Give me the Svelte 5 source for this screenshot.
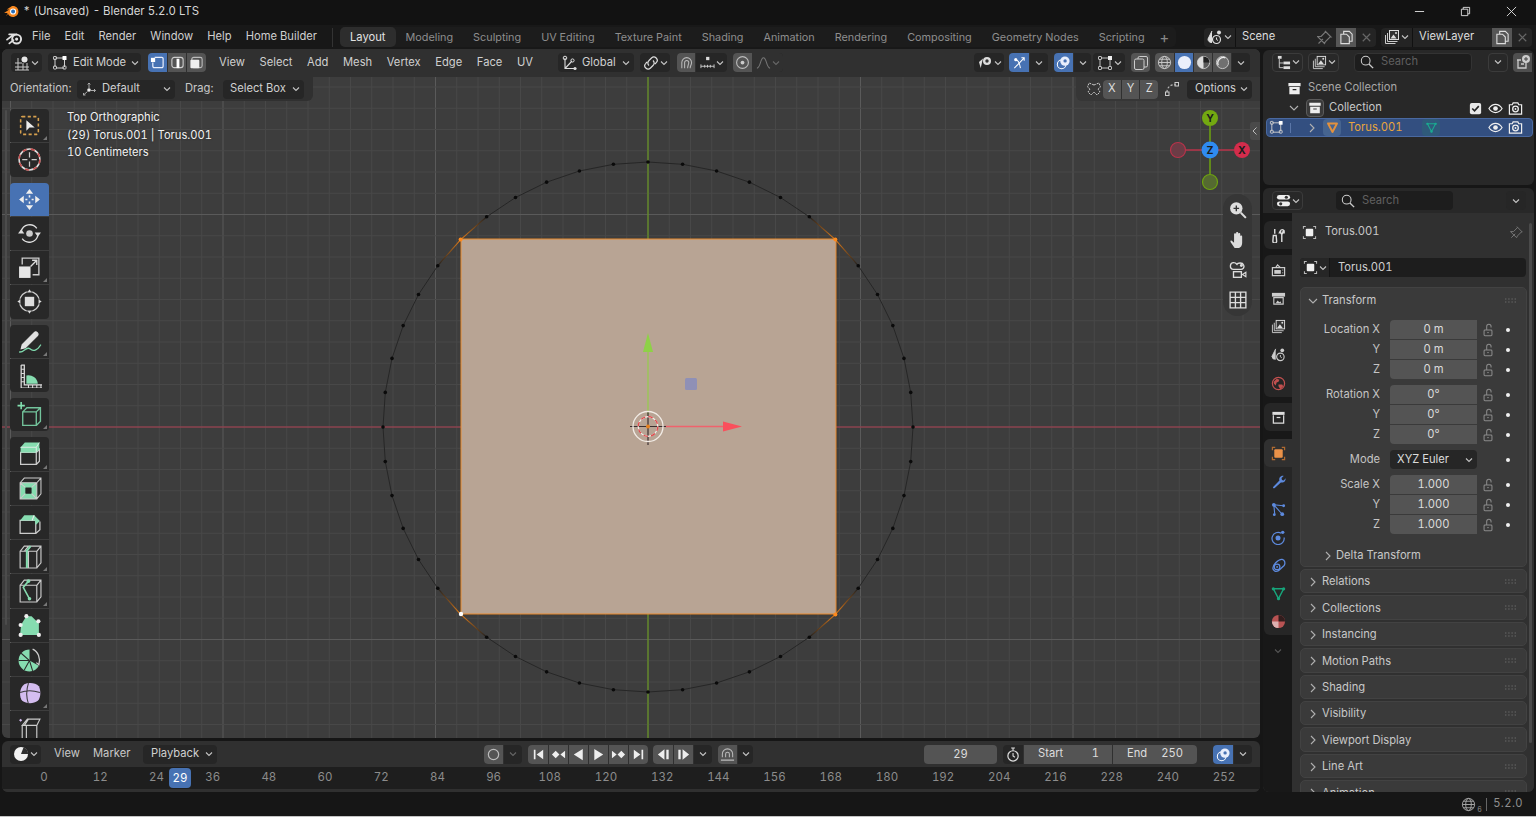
<script>
  const menus = ['File', 'Edit', 'Render', 'Window', 'Help', 'Home Builder'];
  const tabs = ['Layout', 'Modeling', 'Sculpting', 'UV Editing', 'Texture Paint', 'Shading', 'Animation', 'Rendering', 'Compositing', 'Geometry Nodes', 'Scripting'];
  const vpMenus = ['View', 'Select', 'Add', 'Mesh', 'Vertex', 'Edge', 'Face', 'UV'];

  const toolGroups = [
    [['t-select', true], ['t-cursor', false]],
    [['t-move', false, true], ['t-rotate', false], ['t-scale', true], ['t-transform', false]],
    [['t-annotate', true], ['t-measure', false]],
    [['t-add', true]],
    [['t-extrude', true], ['t-inset', false], ['t-bevel', false], ['t-loop', true], ['t-knife', true], ['t-poly', false], ['t-spin', false], ['t-smooth', true], ['t-shear', false]]
  ];

  const propGroups = [
    [['p-tool', '']],
    [['p-render', ''], ['p-output', ''], ['p-layer', ''], ['p-scene', ''], ['p-world', 'red']],
    [['p-coll', '']],
    [['p-object', 'act'], ['p-mod', 'blue'], ['p-part', 'blue'], ['p-phys', 'blue'], ['p-cons', 'blue'], ['p-data', 'green'], ['p-mat', 'rose']]
  ];

  const transformGroups = [
    [['Location X', '0 m'], ['Y', '0 m'], ['Z', '0 m']],
    [['Rotation X', '0°'], ['Y', '0°'], ['Z', '0°']],
    'mode',
    [['Scale X', '1.000'], ['Y', '1.000'], ['Z', '1.000']]
  ];
  const collapsed = ['Relations', 'Collections', 'Instancing', 'Motion Paths', 'Shading', 'Visibility', 'Viewport Display', 'Line Art', 'Animation'];
  const ruler = Array.from({ length: 22 }, (_, i) => i * 12);

  // Free canvas of the 3D view, in screen coordinates
  const cx = 648, cy = 427, R = 265, major = 212.5, minor = 21.25;
  const gridX = [], gridY = [];
  for (let i = -32; i <= 32; i++) {
    const x = cx + i * minor, y = cy + i * minor;
    if (x > 2 && x < 1260) gridX.push({ v: x, major: i % 10 === 0 });
    if (y > 49 && y < 738) gridY.push({ v: y, major: i % 10 === 0 });
  }
  const verts = Array.from({ length: 48 }, (_, i) => {
    const a = (i * 7.5 * Math.PI) / 180;
    return { x: cx + R * Math.sin(a), y: cy - R * Math.cos(a), i };
  });
  const ring = verts.map((v) => `${v.x.toFixed(1)},${v.y.toFixed(1)}`).join(' ');
  const corners = [6, 18, 30, 42];
  const fades = corners.flatMap((c) => [c - 1, c + 1].map((n) => ({ a: verts[c], b: verts[n], id: `f${c}-${n}` })));
</script>

{#snippet ic(name, cls = '')}
  <svg class="ic {cls}" viewBox="0 0 16 16"><use href="#{name}" /></svg>
{/snippet}

{#snippet chev(cls = '')}
  <svg class="chev {cls}" viewBox="0 0 8 8"><path d="M1 2.5l3 3 3-3" /></svg>
{/snippet}

{#snippet arrow(open)}
  <svg class="arrow" viewBox="0 0 10 10"><path d={open ? 'M1 3l4 4 4-4' : 'M3 1l4 4-4 4'} /></svg>
{/snippet}

{#snippet grip()}
  <svg class="grip" viewBox="0 0 12 6"><path d="M0 1h1.4M3.2 1h1.4M6.4 1h1.4M9.6 1h1.4M0 4h1.4M3.2 4h1.4M6.4 4h1.4M9.6 4h1.4" /></svg>
{/snippet}

<svg class="defs" aria-hidden="true">
  <defs>
    <symbol id="logo" viewBox="0 0 16 16"><circle cx="10" cy="9.500" r="4.200" fill="none" stroke="currentColor" stroke-width="1.800" /><circle cx="10" cy="9.500" r="1.500" fill="currentColor" /><path d="M1 10l6-4.500M3 5h7M3.200 13.500 7 10.500" fill="none" stroke="currentColor" stroke-width="1.700" stroke-linecap="round" /></symbol>
    <symbol id="logo-c" viewBox="0 0 16 16"><path d="M1 9.500 6 6H3.500l5-3.200c3.600-.4 6 2 6 5.200 0 3-2.400 5.200-5.200 5.200-2.200 0-4-1.300-4.600-3.100L3 12.500 4.300 9.500z" fill="#f5861f" /><circle cx="9.500" cy="8" r="2.400" fill="#2b6fb8" stroke="#fff" stroke-width="1" /></symbol>
    <symbol id="view3d" viewBox="0 0 16 16"><circle cx="10.500" cy="4.500" r="3" fill="#e6e6e6" /><path d="M4 3v12M1 12h14M1 8h7M1 15h14M9 8v7M13 8v7" fill="none" stroke="#c8c8c8" stroke-width="1" /></symbol>
    <symbol id="editmode" viewBox="0 0 16 16"><path d="M3.500 3h8M3 3.500V12M12.500 4.500V12M4 13h8" fill="none" stroke="currentColor" stroke-width="1" /><rect x="1.500" y="11" width="3" height="3" rx=".6" fill="none" stroke="currentColor" /><rect x="11" y="11" width="3" height="3" rx=".6" fill="none" stroke="currentColor" /><rect x="1.500" y="1.500" width="3" height="3" rx=".6" fill="none" stroke="currentColor" /><rect x="10.500" y="1" width="4" height="4" rx=".6" fill="#fff" /></symbol>
    <symbol id="sel-v" viewBox="0 0 16 16"><path d="M5 2.500h7.500a1.500 1.500 0 0 1 1.500 1.500v8a1.500 1.500 0 0 1-1.500 1.500h-8A1.500 1.500 0 0 1 3 12V8" fill="none" stroke="#e8eefc" stroke-width="1.300" /><rect x="1" y="3" width="4.500" height="4.500" fill="#fff" /></symbol>
    <symbol id="sel-e" viewBox="0 0 16 16"><rect x="2" y="2.500" width="12" height="11" rx="2.500" fill="none" stroke="#ccc" stroke-width="1.200" /><rect x="7" y="4" width="3" height="10" fill="#fff" /></symbol>
    <symbol id="sel-f" viewBox="0 0 16 16"><rect x="3" y="2.500" width="11" height="11" rx="2" fill="none" stroke="#bbb" stroke-width="1.200" /><rect x="1.500" y="5" width="9.500" height="9" rx="1" fill="#eee" /></symbol>
    <symbol id="orient" viewBox="0 0 16 16"><circle cx="8" cy="9" r="1.800" fill="#eee" /><path d="M8 7V2M6.600 3.400 8 2l1.400 1.400M10 9.500h4.500M13 8l1.500 1.500L13 11M6.500 10.500 2.500 14M2.500 12v2h2" fill="none" stroke="#aaa" stroke-width="1" /></symbol>
    <symbol id="global" viewBox="0 0 16 16"><path d="M3 3v10.500h10.500M3 13.500 10 6" fill="none" stroke="#ddd" stroke-width="1.100" /><circle cx="3" cy="3" r="1.800" fill="none" stroke="#ddd" /><circle cx="13" cy="13.500" r="1.600" fill="#ddd" /><circle cx="10.500" cy="5.500" r="1.600" fill="none" stroke="#ddd" /></symbol>
    <symbol id="link" viewBox="0 0 16 16"><path d="M6 10.500a3.300 3.300 0 0 1 0-5l2.500-2.500a3.300 3.300 0 0 1 4.700 4.700L12 9M10 5.500a3.300 3.300 0 0 1 0 5L7.500 13a3.300 3.300 0 0 1-4.700-4.700L4 7" fill="none" stroke="#ddd" stroke-width="1.200" /></symbol>
    <symbol id="magnet" viewBox="0 0 16 16"><path d="M3 14V8a5.200 5.200 0 0 1 10.400 0c0 2.500-1.500 3.500-1.500 6M6 14V8a2.200 2.200 0 0 1 4.400 0c0 2-1.200 3.500-1.200 6" fill="none" stroke="#bbb" stroke-width="1.100" /></symbol>
    <symbol id="snapgrid" viewBox="0 0 16 16"><rect x="6.500" y="2" width="3.500" height="3.500" fill="#ddd" /><path d="M1 10v4M15 10v4M1 12h14M5 10.500v3M8 10.500v3M11 10.500v3" fill="none" stroke="#ccc" /></symbol>
    <symbol id="prop" viewBox="0 0 16 16"><circle cx="8" cy="8" r="6.300" fill="none" stroke="#bbb" stroke-width="1.200" /><circle cx="8" cy="8" r="2" fill="#ccc" /></symbol>
    <symbol id="falloff" viewBox="0 0 16 16"><path d="M1 14c4 0 3.500-11 7-11s3 11 7 11" fill="none" stroke="#777" stroke-width="1.100" /></symbol>
    <symbol id="visible" viewBox="0 0 16 16"><path d="M2 7l4-3.500L3.700 13z" fill="#ddd" /><circle cx="10" cy="6" r="4" fill="#ddd" /><circle cx="10" cy="6" r="1.700" fill="#333" /></symbol>
    <symbol id="gizmo" viewBox="0 0 16 16"><path d="M2.500 14 13 3M10 3h3v3" fill="none" stroke="#fff" stroke-width="1.100" /><path d="M4 5c2 0 4 3 5 9" fill="none" stroke="#fff" stroke-width="1.100" /><circle cx="4" cy="5" r="1.700" fill="#fff" /></symbol>
    <symbol id="overlay" viewBox="0 0 16 16"><circle cx="6" cy="10" r="4.600" fill="none" stroke="#fff" stroke-width="1.100" /><circle cx="9.500" cy="6.500" r="5" fill="#e8eefc" /><circle cx="9.700" cy="6.300" r="1.800" fill="#4772b3" /></symbol>
    <symbol id="meshsel" viewBox="0 0 16 16"><path d="M4 3h8M3 4v8M13 4v8M4 13h8" fill="none" stroke="#bbb" /><rect x="1.500" y="1.500" width="3" height="3" rx=".6" fill="none" stroke="#ccc" /><rect x="1.500" y="11.500" width="3" height="3" rx=".6" fill="none" stroke="#ccc" /><rect x="11.500" y="11.500" width="3" height="3" rx=".6" fill="none" stroke="#ccc" /><rect x="11" y="1" width="4" height="4" fill="#eee" /></symbol>
    <symbol id="xray" viewBox="0 0 16 16"><rect x="5" y="1.500" width="9.500" height="10.500" rx="1.500" fill="none" stroke="#ccc" /><rect x="1.500" y="4" width="9.500" height="10.500" rx="1.500" fill="#545454" stroke="#ccc" /></symbol>
    <symbol id="s-wire" viewBox="0 0 16 16"><g fill="none" stroke="#ccc"><circle cx="8" cy="8" r="6.500" /><ellipse cx="8" cy="8" rx="3" ry="6.500" /><path d="M1.500 8h13M2.500 4.500h11M2.500 11.500h11" /></g></symbol>
    <symbol id="s-solid" viewBox="0 0 16 16"><circle cx="8" cy="8" r="7" fill="#e9eefb" /></symbol>
    <symbol id="s-mat" viewBox="0 0 16 16"><circle cx="8" cy="8" r="6.500" fill="#5a5a5a" stroke="#ccc" /><path d="M8 1.500A6.500 6.500 0 0 0 1.500 8 6.500 6.500 0 0 0 8 14.500z" fill="#ddd" /><path d="M8 8h6.500A6.500 6.500 0 0 0 8 1.500z" fill="#222" /></symbol>
    <symbol id="s-rend" viewBox="0 0 16 16"><circle cx="8" cy="8" r="6.500" fill="#707070" stroke="#ccc" /><path d="M3.500 11A6 6 0 0 1 11 3" fill="none" stroke="#eee" stroke-width="1.400" /></symbol>
    <symbol id="mirror" viewBox="0 0 16 16"><path d="M8 4 3 2 1.500 6 4 8 2 11l3 3 3-3 3 3 3-3-2-3 2.500-2L13 2z" fill="none" stroke="#ccc" stroke-dasharray="2 1" /></symbol>
    <symbol id="automerge" viewBox="0 0 16 16"><path d="M3 11a7 7 0 0 1 9-7" fill="none" stroke="#bbb" stroke-dasharray="2.200 1.600" stroke-width="1.200" /><rect x="1.500" y="11" width="3.500" height="3.500" fill="none" stroke="#ccc" /><rect x="11" y="1.500" width="3.500" height="3.500" fill="none" stroke="#ccc" /></symbol>
    <symbol id="scene" viewBox="0 0 16 16"><path d="M5 2 1 10a3.500 3.500 0 0 0 4 3.500" fill="#ddd" stroke="#ddd" /><circle cx="12" cy="3.500" r="2" fill="#ddd" /><circle cx="9.500" cy="10.500" r="4" fill="#282828" stroke="#ddd" stroke-width="1.200" /><path d="M9.500 8.500v2l1.500 1" fill="none" stroke="#ddd" /></symbol>
    <symbol id="pin" viewBox="0 0 16 16"><path d="M1.500 14.500 6 10M4 7.500 8.500 3l-.5-1 6 6-1 0-4.500 4.500-1 2-7-7z" fill="none" stroke="#777" stroke-width="1.100" /></symbol>
    <symbol id="copy" viewBox="0 0 16 16"><path d="M5 4V1.500h6l3 3V12h-3M2 4.500h6l3 3v7H2z" fill="none" stroke="#ddd" stroke-width="1.200" /></symbol>
    <symbol id="close" viewBox="0 0 16 16"><path d="M4 4l8 8M12 4l-8 8" stroke="#666" stroke-width="1.300" /></symbol>
    <symbol id="layer" viewBox="0 0 16 16"><path d="M1.500 6v8.500h10" fill="none" stroke="#ccc" /><path d="M3.500 4v8.500h10" fill="none" stroke="#ccc" /><rect x="5.500" y="1.500" width="9" height="9" fill="#333" stroke="#ddd" /><path d="M6.500 9.500l3-4 3 4z" fill="#ddd" /><circle cx="12" cy="4" r="1" fill="#ddd" /></symbol>
    <symbol id="outl" viewBox="0 0 16 16"><rect x="2" y="1" width="4" height="3" fill="#ddd" /><path d="M3.500 4v9.500H8M3.500 8.500H8" fill="none" stroke="#ccc" /><rect x="8" y="7" width="7" height="3" fill="#ddd" /><rect x="8" y="12" width="7" height="3" fill="#ddd" /></symbol>
    <symbol id="search" viewBox="0 0 16 16"><circle cx="6.500" cy="6.500" r="5" fill="none" stroke="#ccc" stroke-width="1.200" /><path d="M10.200 10.200 15 15" stroke="#ccc" stroke-width="1.600" /></symbol>
    <symbol id="newcoll" viewBox="0 0 16 16"><path d="M2 6h4M3 6v8h8V9" fill="none" stroke="#ccc" stroke-width="1.300" /><path d="M6 10h3" stroke="#ccc" stroke-width="1.300" /><circle cx="11" cy="5" r="4" fill="#ccc" /><path d="M11 3v4M9 5h4" stroke="#444" /></symbol>
    <symbol id="box" viewBox="0 0 16 16"><path d="M1.500 2h13v3.500h-13z" fill="#eee" /><path d="M2.500 6.500h11V14h-11zM6 8.500h4v1.300H6z" fill="#eee" fill-rule="evenodd" /></symbol>
    <symbol id="check" viewBox="0 0 16 16"><rect x="2" y="2" width="12" height="12" rx="2" fill="#e8e8e8" /><path d="M4.500 8 7 10.500l4.500-5" fill="none" stroke="#222" stroke-width="1.700" /></symbol>
    <symbol id="eye" viewBox="0 0 16 16"><path d="M1 8c2-3 4.500-4.300 7-4.300S13 5 15 8c-2 3-4.500 4.300-7 4.300S3 11 1 8z" fill="none" stroke="#eee" stroke-width="1.300" /><circle cx="8" cy="8" r="2.500" fill="#eee" /></symbol>
    <symbol id="cam" viewBox="0 0 16 16"><path d="M1.500 4h3l1-2h5l1 2h3v10h-13z" fill="none" stroke="#eee" stroke-width="1.300" /><circle cx="8" cy="8.500" r="3" fill="none" stroke="#eee" stroke-width="1.400" /><circle cx="8" cy="8.500" r="1" fill="#eee" /></symbol>
    <symbol id="tri" viewBox="0 0 16 16"><path d="M2.500 3h11L8 13.500z" fill="none" stroke="#e2913e" stroke-width="2.400" stroke-linejoin="round" /></symbol>
    <symbol id="tri-g" viewBox="0 0 16 16"><path d="M3 3.500h10L8 13z" fill="none" stroke="#1aaa90" stroke-width="1.300" /><circle cx="3" cy="3.500" r="1.500" fill="#1aaa90" /><circle cx="13" cy="3.500" r="1.500" fill="#1aaa90" /><circle cx="8" cy="13" r="1.500" fill="#1aaa90" /></symbol>
    <symbol id="lock" viewBox="0 0 16 16"><rect x="3.500" y="8" width="9" height="6.500" rx="1" fill="none" stroke="#8a8a8a" stroke-width="1.200" /><path d="M6.500 8V4a2.500 2.500 0 0 1 5 0v1" fill="none" stroke="#8a8a8a" stroke-width="1.200" /><path d="M7 11h2" stroke="#8a8a8a" /></symbol>
    <symbol id="frame" viewBox="0 0 16 16"><path d="M1.500 4V1.500H4M12 1.500h2.500V4M14.500 12v2.500H12M4 14.500H1.500V12" fill="none" stroke="currentColor" stroke-width="1.100" /><rect x="4" y="4" width="8" height="8" rx="1" fill="#f0f0f0" /></symbol>

    <symbol id="p-tool" viewBox="0 0 16 16"><path d="M4 1v5M2.500 8h3l.5 6a2 2 0 0 1-4 0zM10 3a2.200 2.200 0 0 1 4 0v2h-1V3l-.8 3h-1.400L10 3v2H9zM11.500 6v9" fill="none" stroke="#ddd" stroke-width="1.500" /></symbol>
    <symbol id="p-render" viewBox="0 0 16 16"><path d="M1.500 5h13v8.500h-13zM5 5l2-3 3 3" fill="none" stroke="#ccc" stroke-width="1.300" /><path d="M3.500 7.500h7v4h-7z" fill="#ccc" /><path d="M12.500 7v1M12.500 10v1" stroke="#ccc" /></symbol>
    <symbol id="p-output" viewBox="0 0 16 16"><path d="M1 2h14v4H1z" fill="#ccc" /><path d="M3 7h10v7H3z" fill="none" stroke="#ccc" stroke-width="1.200" /><path d="M5 13l2-3 2 2 1-1 1 2z" fill="#ccc" /></symbol>
    <symbol id="p-layer" viewBox="0 0 16 16"><use href="#layer" width="16" height="16" /></symbol>
    <symbol id="p-scene" viewBox="0 0 16 16"><path d="M5 2 1 10a3.500 3.500 0 0 0 4 3" fill="#ccc" stroke="#ccc" /><circle cx="12" cy="3.500" r="2" fill="#ccc" /><circle cx="10" cy="10.500" r="4" fill="none" stroke="#ccc" stroke-width="1.200" /><path d="M10 8.500v2l1.500 1" fill="none" stroke="#ccc" /></symbol>
    <symbol id="p-world" viewBox="0 0 16 16"><circle cx="8" cy="8" r="6.500" fill="none" stroke="#c2504f" stroke-width="1.300" /><path d="M3 6l3-3 3 1-1 2-2 1-1 3-2-2zM8 9h4l1 2-3 3-2-3z" fill="#c2504f" /></symbol>
    <symbol id="p-coll" viewBox="0 0 16 16"><path d="M1.500 2h13v3.200h-13z" fill="#ddd" /><path d="M2.500 5.500v8.500h11V5.500" fill="none" stroke="#ddd" stroke-width="1.300" /><path d="M6 8h4" stroke="#ddd" stroke-width="1.300" /></symbol>
    <symbol id="p-object" viewBox="0 0 16 16"><path d="M1.500 4.500v-3h3M11.500 1.500h3v3M14.500 11.500v3h-3M4.500 14.500h-3v-3" fill="none" stroke="#b06a30" stroke-width="1.300" /><rect x="3.500" y="3.500" width="9" height="9" rx="1" fill="#ea9148" /></symbol>
    <symbol id="p-mod" viewBox="0 0 16 16"><path d="M2.500 13.500 9 7c-.8-2.500 1-5.500 4.500-5l-2.300 2.300.5 2 2 .5L15.500 4.500c.5 3.500-2.500 5.300-5 4.500l-6.500 6c-1.200 1-2.500-.5-1.500-1.500z" fill="#5d8ade" /></symbol>
    <symbol id="p-part" viewBox="0 0 16 16"><path d="M3 3l10 1M3 3l1 10M3 3l8 9" fill="none" stroke="#5d8ade" stroke-width="1.200" /><circle cx="3" cy="3" r="2" fill="#5d8ade" /><circle cx="13.500" cy="4" r="1.500" fill="#5d8ade" /><circle cx="3.500" cy="13.500" r="1.500" fill="#5d8ade" /><circle cx="12" cy="13" r="2" fill="#5d8ade" /></symbol>
    <symbol id="p-phys" viewBox="0 0 16 16"><path d="M11 3.500A6.500 6.500 0 1 0 14 8" fill="none" stroke="#5d8ade" stroke-width="1.300" /><circle cx="7.500" cy="8.500" r="2.700" fill="#5d8ade" /><circle cx="12.500" cy="2.500" r="1.800" fill="#5d8ade" /></symbol>
    <symbol id="p-cons" viewBox="0 0 16 16"><path d="M2 11c0 3 3.500 4 6 2.500L14 8c1.500-2 1-6-2-6.500S7 3 5 5 2 8.500 2 11z" fill="none" stroke="#5d8ade" stroke-width="1.400" /><circle cx="6.500" cy="9.500" r="3" fill="none" stroke="#5d8ade" stroke-width="1.300" /><circle cx="6.500" cy="9.500" r="1" fill="#5d8ade" /></symbol>
    <symbol id="p-data" viewBox="0 0 16 16"><path d="M2.500 3h11L8 13.500z" fill="none" stroke="#17a57b" stroke-width="1.500" /><circle cx="2.500" cy="3" r="1.700" fill="#17a57b" /><circle cx="13.500" cy="3" r="1.700" fill="#17a57b" /><circle cx="8" cy="13.500" r="1.700" fill="#17a57b" /></symbol>
    <symbol id="p-mat" viewBox="0 0 16 16"><circle cx="8" cy="8" r="7" fill="#b85353" /><path d="M8 8V1a7 7 0 0 1 7 7z" fill="#321d1d" /><path d="M8 8H1a7 7 0 0 0 7 7z" fill="#dcb0b0" /></symbol>

    <symbol id="zoomin" viewBox="0 0 16 16"><circle cx="6.500" cy="6.500" r="5.500" fill="#ddd" /><path d="M4 6.500h5M6.500 4v5" stroke="#333" stroke-width="1.200" /><path d="M10.500 10.500 15 15" stroke="#ddd" stroke-width="1.800" /></symbol>
    <symbol id="hand" viewBox="0 0 16 16"><path d="M5 15 1.500 10c-.8-1.300.5-2 1.500-1l1.500 1.500V3c0-1.300 1.800-1.300 1.800 0v4V1.800c0-1.300 1.900-1.300 1.900 0V7V2.800c0-1.300 1.800-1.300 1.800 0V8V5c0-1.300 1.700-1.300 1.700 0v5.500c0 2-1 4.500-3 4.500z" fill="#ddd" /></symbol>
    <symbol id="navcam" viewBox="0 0 16 16"><path d="M4 7.500a3 3 0 0 1 .5-6c1.500 0 2 1 2.500 1.500.6-1.500 5-2 6 .5 1 2-.5 4-2.500 4z" fill="none" stroke="#ddd" stroke-width="1.200" /><circle cx="11" cy="4" r="1.300" fill="#ddd" /><rect x="4" y="9.500" width="7" height="5" fill="none" stroke="#ddd" stroke-width="1.200" /><path d="M12 12l3-2v4z" fill="none" stroke="#ddd" /></symbol>
    <symbol id="navgrid" viewBox="0 0 16 16"><path d="M1 1h14v14H1zM5.700 1v14M10.300 1v14M1 5.700h14M1 10.300h14" fill="none" stroke="#ddd" stroke-width="1.200" /></symbol>

    <symbol id="clock" viewBox="0 0 16 16"><circle cx="7.500" cy="9.500" r="5.500" fill="none" stroke="#ddd" stroke-width="1.300" /><path d="M5.500 1h4M7.500 1v3M7.500 6.500v3l2 1.500" fill="none" stroke="#ddd" stroke-width="1.200" /></symbol>
    <symbol id="tl" viewBox="0 0 16 16"><circle cx="8" cy="8" r="7" fill="#f2f2f2" /><path d="M8 8l2.500-6.500C14 3 15 5 15 8z" fill="#303030" /></symbol>
    <symbol id="tp-start" viewBox="0 0 16 16"><path d="M3 3h1.800v10H3zM13 3v10L6 8z" fill="#eee" /></symbol>
    <symbol id="tp-pk" viewBox="0 0 16 16"><path d="M5 4l4 4-4 4-4-4zM15 4v8l-5-4z" fill="#eee" /></symbol>
    <symbol id="tp-rev" viewBox="0 0 16 16"><path d="M12.500 2v12L3 8z" fill="#eee" /></symbol>
    <symbol id="tp-play" viewBox="0 0 16 16"><path d="M3.500 2v12L13 8z" fill="#eee" /></symbol>
    <symbol id="tp-nk" viewBox="0 0 16 16"><path d="M1 4v8l5-4zM11 4l4 4-4 4-4-4z" fill="#eee" /></symbol>
    <symbol id="tp-end" viewBox="0 0 16 16"><path d="M11.200 3H13v10h-1.800zM3 3v10l7-5z" fill="#eee" /></symbol>
    <symbol id="tp-pf" viewBox="0 0 16 16"><path d="M9 2.500v11L2 8zM11 3h2.500v10H11z" fill="#eee" /></symbol>
    <symbol id="tp-nf" viewBox="0 0 16 16"><path d="M7 2.500v11L14 8zM2.500 3H5v10H2.500z" fill="#eee" /></symbol>
    <symbol id="autokey" viewBox="0 0 16 16"><circle cx="8" cy="8" r="5.500" fill="none" stroke="#bbb" stroke-width="1.300" /></symbol>
    <symbol id="snapkey" viewBox="0 0 16 16"><path d="M2.500 11V7.500a5.500 5.500 0 0 1 11 0V11M6 11V7.500a2 2 0 0 1 4 0V11M1 14h14" fill="none" stroke="#bbb" stroke-width="1.100" /></symbol>
    <symbol id="globe" viewBox="0 0 16 16"><g fill="none" stroke="#aaa"><circle cx="8" cy="8" r="6.500" /><ellipse cx="8" cy="8" rx="3" ry="6.500" /><path d="M1.500 8h13M2.500 4.500h11M2.500 11.500h11" /></g></symbol>

    <symbol id="t-select" viewBox="0 0 24 24"><rect x="3.500" y="3.500" width="17" height="17" rx="1.500" fill="none" stroke="#d6a04e" stroke-width="1.500" stroke-dasharray="3 2.300" /><path d="M9 7v10l3-3h5z" fill="#ececec" /></symbol>
    <symbol id="t-cursor" viewBox="0 0 24 24"><circle cx="12" cy="12" r="10" fill="none" stroke="#ddd" stroke-width="1.400" /><circle cx="12" cy="12" r="10" fill="none" stroke="#c44b4b" stroke-width="1.500" stroke-dasharray="4 4" /><path d="M12 5v5M12 14v5M5 12h5M14 12h5" stroke="#ccc" stroke-width="1.200" /></symbol>
    <symbol id="t-move" viewBox="0 0 24 24"><path d="M12 2 8.500 6.500h7zM12 22l-3.500-4.500h7zM2 12l4.500-3.500v7zM22 12l-4.500-3.500v7z" fill="#eee" /><path d="M12 8v2M12 14v2M8 12h2M14 12h2" stroke="#eee" stroke-width="1.500" /></symbol>
    <symbol id="t-rotate" viewBox="0 0 24 24"><circle cx="12" cy="12" r="3.200" fill="#ccc" /><path d="M4 10a8.500 8.500 0 0 1 15-3M20 14a8.500 8.500 0 0 1-15 3" fill="none" stroke="#ddd" stroke-width="1.300" /><path d="M1 12h6l-3-4zM23 11h-6l3 4z" fill="#ddd" /></symbol>
    <symbol id="t-scale" viewBox="0 0 24 24"><rect x="2" y="11" width="11" height="11" fill="#e6e6e6" /><path d="M5 9V3h16v16h-6" fill="none" stroke="#ccc" stroke-width="1.300" /><path d="M13 11l6-6M14.500 5H19v4.500" fill="none" stroke="#ddd" stroke-width="1.300" /></symbol>
    <symbol id="t-transform" viewBox="0 0 24 24"><circle cx="12" cy="12" r="9.500" fill="none" stroke="#ccc" stroke-width="1.200" /><rect x="7.500" y="7.500" width="9" height="9" fill="#ddd" /><path d="M12 0l-2.500 3.500h5zM12 24l-2.500-3.500h5zM0 12l3.500-2.500v5zM24 12l-3.500-2.500v5z" fill="#ddd" stroke="#282828" stroke-width=".5" /></symbol>
    <symbol id="t-annotate" viewBox="0 0 24 24"><path d="M5 15 16.500 3.500a2 2 0 0 1 3 3L8 18l-4 1z" fill="#e2e2e2" stroke="#e2e2e2" /><path d="M2 22c4 1 6-4 9-3.500s3 3.500 7 1.500 3-3 5-5" fill="none" stroke="#7ed7ab" stroke-width="1.300" /></symbol>
    <symbol id="t-measure" viewBox="0 0 24 24"><path d="M9 12a9 9 0 0 1 11 8H9z" fill="#86dcb0" /><path d="M4 2h3v19h18" fill="none" stroke="#ddd" stroke-width="1.200" /><path d="M4 2v22h21" fill="none" stroke="#ddd" stroke-width="1.200" /><path d="M4 6h3M4 10h3M4 14h3M4 18h3M11 21v3M15 21v3M19 21v3M23 21v3" stroke="#ddd" /></symbol>
    <symbol id="t-add" viewBox="0 0 24 24"><path d="M5.500 9.500h13v13h-13zM5.500 9.500l4-4h13v13l-4 4M18.500 9.500l4-4" fill="none" stroke="#73c49c" stroke-width="1.300" /><path d="M4 0v7M.5 3.500h7" stroke="#83e0b0" stroke-width="1.500" /></symbol>
    <symbol id="t-extrude" viewBox="0 0 24 24"><path d="M3.500 11h15v11.500h-15zM18.500 11l3-3v11.500l-3 3" fill="none" stroke="#ccc" stroke-width="1.200" /><path d="M3.500 11V6l4-4.500h14V8l-3 3z" fill="#86dcb0" /><path d="M3.500 6h15l3-4.500M18.500 6v5" fill="none" stroke="#eee" stroke-width=".8" /></symbol>
    <symbol id="t-inset" viewBox="0 0 24 24"><path d="M3 6.500h16V22H3z" fill="#86dcb0" /><path d="M8 11h6v6H8z" fill="#222" /><path d="M3 6.500h16V22H3zM3 6.500l4-4.500h16v15l-4 5M19 6.500 23 2M3 6.500 8 11M19 6.500 14 11M3 22l5-5M19 22l-5-5" fill="none" stroke="#ccc" stroke-width="1" /></symbol>
    <symbol id="t-bevel" viewBox="0 0 24 24"><path d="M3 10h15v12.500H3zM18 22.500l4-3.500v-8" fill="none" stroke="#ccc" stroke-width="1.200" /><path d="M3 10l4-5h9.500l5.500 5.500-4 4-1-4.500z" fill="#86dcb0" /><path d="M16.500 5l-2 5" stroke="#eee" /></symbol>
    <symbol id="t-loop" viewBox="0 0 24 24"><path d="M3 7h16v16H3zM3 7l4-5h16v16l-4 5M19 7l4-5M7 7l4-5M11 7v16" fill="none" stroke="#ccc" stroke-width="1.100" /><path d="M9 7l4-5M9.500 7v16" fill="none" stroke="#86dcb0" stroke-width="2" /></symbol>
    <symbol id="t-knife" viewBox="0 0 24 24"><path d="M3 7h16v16H3zM3 7l4-5h16v16l-4 5M19 7l4-5" fill="none" stroke="#ccc" stroke-width="1.100" /><path d="M11 3 6 9l6 11" fill="none" stroke="#86dcb0" stroke-width="1.500" /><circle cx="11" cy="3" r="1.700" fill="#86dcb0" /><circle cx="12" cy="20" r="1.700" fill="#86dcb0" /></symbol>
    <symbol id="t-poly" viewBox="0 0 24 24"><path d="M9 3h5l7 7 0 11H3l1-10z" fill="#86dcb0" /><g fill="#eee"><circle cx="9" cy="3" r="2" /><circle cx="20.500" cy="8" r="2" /><circle cx="3.500" cy="11.500" r="2" /><circle cx="3.500" cy="21" r="2" /><circle cx="21" cy="21" r="2" /></g></symbol>
    <symbol id="t-spin" viewBox="0 0 24 24"><path d="M12 13V2.500A10.500 10.500 0 0 0 1.500 13 10.500 10.500 0 0 0 12 23.500 10.500 10.500 0 0 0 21 18z" fill="#86dcb0" /><path d="M12 13 4 6M12 13H1.500M12 13l-5 9M12 13l3 10" stroke="#2a2a2a" /><path d="M15 2c5 2 8 9 6 15l-2.500-2" fill="none" stroke="#ccc" stroke-width="1.200" /></symbol>
    <symbol id="t-smooth" viewBox="0 0 24 24"><path d="M7 3c5-2 11-1 14 2 2 4 2 11-1 14-4 3-11 3-15 0C2 15 2 7 7 3z" fill="#d4bdf0" /><path d="M3 11c5-2 13-2 19 0M11 2c-2 6-2 14 0 20" fill="none" stroke="#3a3a3a" /></symbol>
    <symbol id="t-shear" viewBox="0 0 24 24"><path d="M5 10h14l3-6H10zM5 10v14M19 10v14M9 10v14M11 4 7 10" fill="none" stroke="#ccc" stroke-width="1.100" /><path d="M3 2l1.500 1.500L6 2 4.500.5z" fill="#d4bdf0" transform="translate(-1 3)" /></symbol>
  </defs>
</svg>

<div class="app">
  <header class="titlebar">
    <svg class="ic logo-c" viewBox="0 0 16 16"><use href="#logo-c" /></svg>
    <span class="title">* (Unsaved) - Blender 5.2.0 LTS</span>
    <div class="win">
      <svg viewBox="0 0 12 12"><path d="M1 6h10" /></svg>
      <svg viewBox="0 0 12 12"><path d="M1.500 3.500h7v7h-7zM3.500 3.500v-2h7v7h-2" /></svg>
      <svg viewBox="0 0 12 12"><path d="M1 1l10 10M11 1 1 11" /></svg>
    </div>
  </header>

  <nav class="topbar">
    {@render ic('logo', 'logo')}
    <div class="topmenus">
      {#each menus as m}<span>{m}</span>{/each}
    </div>
    <div class="vsep"></div>
    <div class="tabs">
      {#each tabs as t, i}<span class="tab" class:active={i === 0}>{t}</span>{/each}
      <span class="plus">+</span>
    </div>
    <div class="scene-fields">
      <div class="idfield scene">
        <span class="idicon">{@render ic('scene')}{@render chev()}</span>
        <span class="idname">Scene</span>
        {@render ic('pin', 'pinned')}
        <span class="idbtn on">{@render ic('copy')}</span>
        <span class="idbtn">{@render ic('close')}</span>
      </div>
      <div class="idfield vl">
        <span class="idicon">{@render ic('layer')}{@render chev()}</span>
        <span class="idname">ViewLayer</span>
        <span class="idbtn on">{@render ic('copy')}</span>
        <span class="idbtn">{@render ic('close')}</span>
      </div>
    </div>
  </nav>

  <main class="main">
    <div class="leftcol">
      <section class="viewport">
        <svg class="canvas" viewBox="2 49 1258 689">
          <defs>
            {#each fades as f}
              <linearGradient id={f.id} gradientUnits="userSpaceOnUse" x1={f.a.x} y1={f.a.y} x2={f.b.x} y2={f.b.y}>
                <stop offset="0" stop-color="#e8821e" />
                <stop offset="1" stop-color="#1e1e1e" />
              </linearGradient>
            {/each}
          </defs>
          {#each gridX as g}<line x1={g.v} x2={g.v} y1="49" y2="738" class={g.major ? 'gmaj' : 'gmin'} />{/each}
          {#each gridY as g}<line y1={g.v} y2={g.v} x1="2" x2="1260" class={g.major ? 'gmaj' : 'gmin'} />{/each}
          <line x1="2" x2="1260" y1="427" y2="427" class="axis-x" />
          <line x1="648" x2="648" y1="49" y2="738" class="axis-y" />
          <polygon points={ring} class="ring" />
          {#each fades as f}<line x1={f.a.x} y1={f.a.y} x2={f.b.x} y2={f.b.y} stroke="url(#{f.id})" stroke-width="1.100" />{/each}
          {#each verts as v}
            {#if !corners.includes(v.i)}<circle cx={v.x} cy={v.y} r="1.800" class="vert" />{/if}
          {/each}
          <rect x="461" y="239" width="375" height="375" class="face" />
          <circle cx={verts[6].x} cy={verts[6].y} r="2" class="vsel" />
          <circle cx={verts[18].x} cy={verts[18].y} r="2" class="vsel" />
          <circle cx={verts[42].x} cy={verts[42].y} r="2" class="vsel" />
          <circle cx="461" cy="614" r="2.200" class="vact" />

          <rect x="685" y="378" width="12" height="12" rx="1.500" class="gplane" />
          <line x1="648" x2="648" y1="352" y2="414" class="garrow-y" />
          <path d="M648 333l-5 19h10z" class="gcone-y" />
          <line x1="665" x2="724" y1="426.500" y2="426.500" class="garrow-x" />
          <path d="M742 426.500l-19-5v10z" class="gcone-x" />
          <line x1="630" x2="666" y1="426.500" y2="426.500" class="c-cross" />
          <line x1="648" x2="648" y1="412" y2="445" class="c-cross" />
          <circle cx="648" cy="426.500" r="15" class="c-ring" />
          <circle cx="648" cy="426.500" r="9.800" class="c-ringw" />
          <circle cx="648" cy="426.500" r="9.800" class="c-ringr" />
          <circle cx="648" cy="426.500" r="2" class="c-dot" />

          <line x1="1186" x2="1234" y1="150" y2="150" class="n-x" />
          <line x1="1210" x2="1210" y1="126" y2="174" class="n-y" />
          <circle cx="1178" cy="150" r="7.500" class="n-xm" />
          <circle cx="1210" cy="182" r="7.500" class="n-ym" />
          <circle cx="1242" cy="150" r="8" class="n-xp" />
          <circle cx="1210" cy="118" r="8" class="n-yp" />
          <circle cx="1210" cy="150" r="8.500" class="n-zp" />
          <text x="1242" y="153.800" class="n-t">X</text>
          <text x="1210" y="121.800" class="n-t">Y</text>
          <text x="1210" y="153.800" class="n-t">Z</text>
        </svg>

        <div class="vp-head">
          <button class="btn w31">{@render ic('view3d')}{@render chev()}</button>
          <button class="btn mode">{@render ic('editmode')}<span>Edit Mode</span>{@render chev('end')}</button>
          <div class="seg selmodes">
            <span class="cell blue">{@render ic('sel-v')}</span>
            <span class="cell grey">{@render ic('sel-e')}</span>
            <span class="cell grey">{@render ic('sel-f')}</span>
          </div>
          <div class="vpmenus">{#each vpMenus as m}<span>{m}</span>{/each}</div>
          <button class="btn global">{@render ic('global')}<span>Global</span>{@render chev('end')}</button>
          <button class="btn pivot">{@render ic('link')}{@render chev()}</button>
          <div class="seg snap">
            <span class="cell grey w18">{@render ic('magnet')}</span>
            <span class="cell w32">{@render ic('snapgrid')}{@render chev()}</span>
          </div>
          <div class="seg propg">
            <span class="cell grey w19">{@render ic('prop')}</span>
            <span class="cell dim w31">{@render ic('falloff')}{@render chev('dimc')}</span>
          </div>
          <div class="vp-right">
            <button class="btn w31 vis">{@render ic('visible')}{@render chev()}</button>
            <div class="seg giz">
              <span class="cell blue w20">{@render ic('gizmo')}</span>
              <span class="cell w19">{@render chev()}</span>
            </div>
            <div class="seg ovl">
              <span class="cell blue w19">{@render ic('overlay')}</span>
              <span class="cell w18">{@render chev()}</span>
            </div>
            <button class="btn msel">{@render ic('meshsel')}{@render chev()}</button>
            <button class="btn xr">{@render ic('xray')}</button>
            <div class="seg shade">
              <span class="cell grey w19">{@render ic('s-wire')}</span>
              <span class="cell blue w19">{@render ic('s-solid')}</span>
              <span class="cell grey w19">{@render ic('s-mat')}</span>
              <span class="cell grey w19">{@render ic('s-rend')}</span>
              <span class="cell w19">{@render chev()}</span>
            </div>
          </div>
        </div>

        <div class="ts">
          <div class="ts-left">
            <span class="lbl orientl">Orientation:</span>
            <button class="btn orient">{@render ic('orient')}<span>Default</span>{@render chev('end')}</button>
            <span class="lbl drag">Drag:</span>
            <button class="btn dragbox"><span>Select Box</span>{@render chev('end')}</button>
          </div>
          <div class="ts-right">
            {@render ic('mirror', 'plain')}
            <div class="seg xyz"><span class="cell grey">X</span><span class="cell grey">Y</span><span class="cell grey">Z</span></div>
            {@render ic('automerge', 'plain am')}
            <button class="btn opts"><span>Options</span>{@render chev('end')}</button>
          </div>
        </div>

        <div class="ovtext">
          <div>Top Orthographic</div>
          <div>(29) Torus.001 | Torus.001</div>
          <div>10 Centimeters</div>
        </div>

        <div class="toolbar">
          {#each toolGroups as group}
            <div class="tgroup">
              {#each group as [name, corner, active]}
                <div class="tool" class:corner class:active>
                  <svg class="ticon" viewBox="0 0 24 24"><use href="#{name}" /></svg>
                </div>
              {/each}
            </div>
          {/each}
        </div>
        <div class="tbscroll"></div>

        <div class="navpill">
          {@render ic('zoomin', 'nav')}
          {@render ic('hand', 'nav')}
          {@render ic('navcam', 'nav')}
          {@render ic('navgrid', 'nav')}
        </div>
        <div class="sidetab"><svg viewBox="0 0 10 10"><path d="M6.500 1.500 3 5l3.500 3.500" /></svg></div>
      </section>

      <section class="timeline">
        <div class="tl-head">
          <button class="btn w31">{@render ic('tl')}{@render chev()}</button>
          <span class="tl-menu first">View</span>
          <span class="tl-menu second">Marker</span>
          <button class="btn playback"><span>Playback</span>{@render chev('end')}</button>
          <div class="seg autok">
            <span class="cell grey w19">{@render ic('autokey')}</span>
            <span class="cell w19">{@render chev('dimc')}</span>
          </div>
          <div class="seg transport">
            <span class="cell grey w20">{@render ic('tp-start')}</span>
            <span class="cell grey w20">{@render ic('tp-pk')}</span>
            <span class="cell grey w20">{@render ic('tp-rev')}</span>
            <span class="cell grey w20">{@render ic('tp-play')}</span>
            <span class="cell grey w20">{@render ic('tp-nk')}</span>
            <span class="cell grey w20">{@render ic('tp-end')}</span>
          </div>
          <div class="seg kf">
            <span class="cell grey w20">{@render ic('tp-pf')}</span>
            <span class="cell grey w20">{@render ic('tp-nf')}</span>
            <span class="cell w19">{@render chev()}</span>
          </div>
          <div class="seg snapk">
            <span class="cell grey w19">{@render ic('snapkey')}</span>
            <span class="cell w16">{@render chev()}</span>
          </div>
          <div class="tl-right">
            <div class="frame">29</div>
            <div class="seg range">
              <span class="cell w20">{@render ic('clock')}</span>
              <span class="cell grey rng startf"><em>Start</em><em>1</em></span>
              <span class="cell grey rng endf"><em>End</em><em>250</em></span>
            </div>
            <div class="seg tlo">
              <span class="cell blue w20">{@render ic('overlay')}</span>
              <span class="cell w19">{@render chev()}</span>
            </div>
          </div>
        </div>
        <div class="ruler">
          {#each ruler as n}<span>{n}</span>{/each}
          <div class="playhead">29</div>
        </div>
        <div class="tl-foot"></div>
      </section>
    </div>

    <div class="rightcol">
      <section class="outliner">
        <div class="ol-head">
          <button class="btn olb">{@render ic('outl')}{@render chev()}</button>
          <button class="btn olb v">{@render ic('layer')}{@render chev()}</button>
          <div class="searchbox ol">{@render ic('search', 's14')}<span>Search</span></div>
          <button class="btn olf">{@render chev()}</button>
          <button class="btn oln">{@render ic('newcoll')}</button>
        </div>
        <div class="olrow r1">{@render ic('box', 'b')}<span>Scene Collection</span></div>
        <div class="olrow r2">
          {@render arrow(true)}
          <span class="boxbg">{@render ic('box', 'b14')}</span>
          <span class="grow">Collection</span>
          {@render ic('check', 'r')}{@render ic('eye', 'r')}{@render ic('cam', 'r')}
        </div>
        <div class="olrow r3">
          {@render ic('editmode', 'em')}
          <i class="rsep"></i>
          {@render arrow(false)}
          <span class="obg">{@render ic('tri', 't14')}</span>
          <span class="objname">Torus.001</span>
          <span class="dbg">{@render ic('tri-g', 't14')}</span>
          <span class="grow"></span>
          {@render ic('eye', 'r')}{@render ic('cam', 'r')}
        </div>
      </section>

      <section class="props">
        <div class="pr-head">
          <button class="btn olb">
            <svg class="ic" viewBox="0 0 16 16"><rect x="1" y="2" width="14" height="5" rx="2.500" fill="#eee" /><circle cx="11" cy="4.500" r="1.700" fill="#333" /><rect x="1" y="9" width="14" height="5" rx="2.500" fill="#eee" /><circle cx="5" cy="11.500" r="1.700" fill="#333" /></svg>
            {@render chev()}
          </button>
          <div class="searchbox pr">{@render ic('search', 's14')}<span>Search</span></div>
          <button class="btn prf">{@render chev()}</button>
        </div>
        <div class="pr-body">
          <aside class="pr-tabs">
            {#each propGroups as g}
              <div class="ptgroup">
                {#each g as [name, kind]}
                  <div class="pt {kind}">{@render ic(name)}</div>
                {/each}
              </div>
            {/each}
            <div class="ptmore">{@render chev()}</div>
          </aside>
          <div class="pr-main">
            <div class="crumb">{@render ic('frame', 'fr')}<span>Torus.001</span>{@render ic('pin', 'crumbpin')}</div>
            <div class="namefield">
              <span class="nf-ic">{@render ic('frame', 'fr')}{@render chev()}</span>
              <span class="nf-tx">Torus.001</span>
            </div>
            <div class="panel transform">
              <div class="ph">{@render arrow(true)}<span>Transform</span>{@render grip()}</div>
              <div class="tf">
                {#each transformGroups as g}
                  {#if g === 'mode'}
                    <div class="frow">
                      <span class="flabel">Mode</span>
                      <div class="modebtn"><span>XYZ Euler</span>{@render chev('end')}</div>
                      <b></b>
                      <i class="dot"></i>
                    </div>
                  {:else}
                    <div class="fgroup">
                      {#each g as [l, v]}
                        <div class="frow">
                          <span class="flabel">{l}</span>
                          <div class="num">{v}</div>
                          {@render ic('lock', 'lk')}
                          <i class="dot"></i>
                        </div>
                      {/each}
                    </div>
                  {/if}
                {/each}
              </div>
              <div class="delta">{@render arrow(false)}<span>Delta Transform</span></div>
            </div>
            {#each collapsed as c}
              <div class="panel closed"><div class="ph">{@render arrow(false)}<span>{c}</span>{@render grip()}</div></div>
            {/each}
          </div>
          <div class="scrolltrack"><i></i></div>
        </div>
      </section>
    </div>
  </main>

  <footer class="status">
    <span class="lang">{@render ic('globe', 'g')}<sub>6</sub></span>
    <i class="st-sep"></i>
    <span class="ver">5.2.0</span>
  </footer>
</div>

<style>
  :global(body) {
    margin: 0;
    background: #161616;
    overflow: hidden;
  }
  .defs {
    position: absolute;
    width: 0;
    height: 0;
  }
  .app {
    width: 1536px;
    height: 817px;
    display: flex;
    flex-direction: column;
    font: 11.2px/1 Inter, "Noto Sans", sans-serif;
    font-feature-settings: "tnum";
    white-space: nowrap;
    color: #d0d0d0;
    background: #161616;
    overflow: hidden;
    border-bottom: 1px solid #c4c4c4;
    box-sizing: border-box;
  }
  button {
    font: inherit;
    color: inherit;
    border: 0;
    padding: 0;
    margin: 0;
  }
  .ic {
    width: 16px;
    height: 16px;
    flex: none;
    display: block;
  }
  .chev {
    width: 8px;
    height: 8px;
    flex: none;
    fill: none;
    stroke: #c4c4c4;
    stroke-width: 1.100;
  }
  .chev.end {
    margin-left: auto;
  }
  .chev.dimc {
    stroke: #666;
  }
  .arrow {
    width: 10px;
    height: 10px;
    flex: none;
    fill: none;
    stroke: #b0b0b0;
    stroke-width: 1.100;
  }
  .grip {
    width: 12px;
    height: 6px;
    margin-left: auto;
    margin-right: 9px;
    fill: none;
    stroke: #5a5a5a;
    stroke-width: 1.500;
  }

  /* title bar */
  .titlebar {
    height: 23px;
    padding-bottom: 2px;
    flex: none;
    display: flex;
    align-items: center;
    background: #121212;
    padding-left: 3px;
    color: #d6d6d6;
  }
  .logo-c {
    width: 17px;
    height: 17px;
  }
  .title {
    margin-left: 3px;
    font-size: 11.400px;
  }
  .win {
    margin-left: auto;
    display: flex;
    gap: 35px;
    padding-right: 19px;
  }
  .win svg {
    width: 11px;
    height: 11px;
    fill: none;
    stroke: #e0e0e0;
    stroke-width: 1;
  }

  /* top bar */
  .topbar {
    height: 24px;
    flex: none;
    display: flex;
    align-items: center;
    background: #181818;
    padding-left: 6px;
    color: #cfcfcf;
  }
  .logo {
    color: #e0e0e0;
    width: 17px;
    height: 17px;
  }
  .topmenus {
    display: flex;
    justify-content: space-between;
    width: 285px;
    margin-left: 9px;
  }
  .vsep {
    width: 1px;
    height: 19px;
    background: #333;
    margin-left: 15px;
  }
  .tabs {
    display: flex;
    align-items: center;
    margin-left: 7px;
    background: #1c1c1c;
    border-radius: 5px;
    height: 20px;
  }
  .tab {
    padding: 0 10px;
    height: 20px;
    line-height: 20px;
    color: #8e8e8e;
    border-radius: 5px;
    font-size: 10.850px;
  }
  .tab.active {
    background: #2d2d2d;
    color: #e2e2e2;
    font-size: 11.200px;
  }
  .plus {
    color: #888;
    font-size: 15px;
    margin-left: 5px;
    margin-right: 7px;
  }
  .scene-fields {
    margin-left: auto;
    display: flex;
    gap: 5px;
    padding-right: 4px;
  }
  .idfield {
    height: 19px;
    display: flex;
    align-items: center;
    background: #242424;
    border-radius: 4px;
    overflow: hidden;
  }
  .idfield.scene {
    width: 172px;
  }
  .idfield.vl {
    width: 151px;
  }
  .idicon {
    width: 32px;
    height: 19px;
    display: flex;
    align-items: center;
    justify-content: center;
    gap: 1px;
    flex: none;
    border-right: 1px solid #111;
    box-sizing: border-box;
  }
  .idname {
    padding-left: 6px;
    flex: 1;
    color: #ddd;
  }
  .pinned {
    margin-right: 3px;
  }
  .idbtn {
    width: 20px;
    height: 19px;
    display: flex;
    align-items: center;
    justify-content: center;
  }
  .idbtn .ic {
    width: 15px;
    height: 15px;
  }
  .idbtn.on {
    background: #565656;
  }

  /* layout */
  .main {
    min-height: 0;
    display: flex;
    gap: 3px;
    padding: 0 2px;
    height: 743px;
    flex: 0 0 743px;
  }
  .leftcol {
    width: 1258px;
    flex: none;
    display: flex;
    flex-direction: column;
    gap: 3px;
  }
  .rightcol {
    width: 271px;
    flex: none;
    display: flex;
    flex-direction: column;
    gap: 3px;
    padding-top: 1px;
    box-sizing: border-box;
  }

  /* viewport */
  .viewport {
    position: relative;
    height: 689px;
    flex: none;
    background: #3d3d3d;
    border-radius: 6px;
    overflow: hidden;
  }
  .canvas {
    position: absolute;
    inset: 0;
    width: 100%;
    height: 100%;
    display: block;
  }
  .gmin {
    stroke: #484848;
    stroke-width: 1;
  }
  .gmaj {
    stroke: #5a5a5a;
    stroke-width: 1;
  }
  .axis-x {
    stroke: #a5384b;
    stroke-width: 1;
  }
  .axis-y {
    stroke: #6ba116;
    stroke-width: 1;
  }
  .ring {
    fill: none;
    stroke: #262626;
    stroke-width: 1;
  }
  .vert {
    fill: #0a0a0a;
  }
  .face {
    fill: #b8a494;
    stroke: #e8892c;
    stroke-width: 1;
  }
  .vsel {
    fill: #ff8a1c;
  }
  .vact {
    fill: #fff;
  }
  .gplane {
    fill: #8f90b6;
  }
  .garrow-y {
    stroke: #9cc45a;
    stroke-width: 1.500;
  }
  .gcone-y {
    fill: #8ed147;
  }
  .garrow-x {
    stroke: #f0626c;
    stroke-width: 1.500;
  }
  .gcone-x {
    fill: #fa4f5c;
  }
  .c-cross {
    stroke: #3c3030;
    stroke-width: 1.200;
  }
  .c-ring {
    fill: none;
    stroke: #f2ece6;
    stroke-width: 1.300;
  }
  .c-ringw {
    fill: none;
    stroke: #f4f0ec;
    stroke-width: 1.200;
  }
  .c-ringr {
    fill: none;
    stroke: #e2484c;
    stroke-width: 1.300;
    stroke-dasharray: 4.500 3.200;
  }
  .c-dot {
    fill: #e8821e;
  }
  .n-x {
    stroke: #b8334a;
    stroke-width: 1.500;
  }
  .n-y {
    stroke: #6ea30f;
    stroke-width: 1.500;
  }
  .n-xm {
    fill: #6b3c46;
    stroke: #b8334a;
    stroke-width: 1.200;
  }
  .n-ym {
    fill: #556a31;
    stroke: #6ea30f;
    stroke-width: 1.200;
  }
  .n-xp {
    fill: #d42c4c;
  }
  .n-yp {
    fill: #73a911;
  }
  .n-zp {
    fill: #2f8bf0;
  }
  .n-t {
    font: 700 10.500px Inter, sans-serif;
    text-anchor: middle;
    fill: #1c1c1c;
  }

  .vp-head {
    position: relative;
    height: 28px;
    box-sizing: border-box;
    background: #303030;
    display: flex;
    align-items: flex-start;
    padding: 4px 10px 0 9px;
  }
  .btn {
    height: 19px;
    background: #262626;
    border-radius: 4px;
    display: flex;
    align-items: center;
    justify-content: center;
    gap: 1px;
    flex: none;
    color: #d0d0d0;
    font-size: 11.200px;
    box-sizing: border-box;
  }
  .mode {
    width: 93px;
    margin-left: 6px;
    padding: 0 4px;
    justify-content: flex-start;
    gap: 5px;
  }
  .seg {
    display: flex;
    height: 19px;
    border-radius: 4px;
    overflow: hidden;
    flex: none;
    background: #262626;
  }
  .cell {
    display: flex;
    align-items: center;
    justify-content: center;
    gap: 1px;
    height: 19px;
    box-sizing: border-box;
    flex: none;
  }
  .cell .ic {
    width: 15px;
    height: 15px;
  }
  .cell + .cell {
    border-left: 1px solid #303030;
  }
  .cell.grey {
    background: #545454;
  }
  .cell.blue {
    background: #4772b3;
  }
  .cell.dim {
    background: #303030;
  }
  .w16 {
    width: 16px;
  }
  .w18 {
    width: 18px;
  }
  .w19 {
    width: 19px;
  }
  .w20 {
    width: 20px;
  }
  .w31 {
    width: 31px;
  }
  .w32 {
    width: 32px;
  }
  .selmodes {
    margin-left: 7px;
    width: 58px;
  }
  .selmodes .cell {
    flex: 1;
  }
  .vpmenus {
    display: flex;
    justify-content: space-between;
    width: 314px;
    margin-left: 13px;
    height: 19px;
    align-items: center;
    color: #cfcfcf;
  }
  .global {
    width: 76px;
    margin-left: 25px;
    padding: 0 4px;
    justify-content: flex-start;
    gap: 4px;
  }
  .pivot {
    width: 30px;
    margin-left: 6px;
  }
  .snap {
    margin-left: 7px;
  }
  .propg {
    margin-left: 6px;
  }
  .vp-right {
    margin-left: auto;
    display: flex;
  }
  .giz {
    margin-left: 5px;
  }
  .ovl {
    margin-left: 6px;
  }
  .msel {
    width: 32px;
    margin-left: 2px;
  }
  .xr {
    width: 19px;
    margin-left: 6px;
    background: #545454;
  }
  .shade {
    margin-left: 5px;
  }
  .vis {
    width: 30px;
  }

  .ts {
    position: relative;
    display: flex;
    justify-content: space-between;
  }
  .ts-left {
    height: 24px;
    display: flex;
    align-items: center;
    background: #303030;
    width: 311px;
    border-bottom-right-radius: 6px;
    box-sizing: border-box;
    padding-left: 8px;
    color: #c8c8c8;
  }
  .lbl {
    color: #c8c8c8;
  }
  .orientl {
    width: 62px;
  }
  .orient {
    width: 98px;
    margin-left: 5px;
    padding: 0 4px;
    justify-content: flex-start;
    gap: 5px;
  }
  .drag {
    margin-left: 10px;
    width: 29px;
  }
  .dragbox {
    width: 81px;
    margin-left: 9px;
    padding: 0 4px 0 7px;
    justify-content: flex-start;
  }
  .ts-right {
    width: 184px;
    height: 24px;
    display: flex;
    align-items: center;
    background: #363636;
    border-radius: 0 0 0 6px;
    box-sizing: border-box;
    padding-left: 10px;
  }
  .plain {
    width: 16px;
    height: 16px;
  }
  .xyz {
    margin-left: 1px;
    width: 55px;
    color: #ddd;
  }
  .xyz .cell {
    flex: 1;
  }
  .am {
    margin-left: 6px;
  }
  .opts {
    width: 65px;
    margin-left: 7px;
    padding: 0 4px 0 8px;
    justify-content: flex-start;
  }
  .ovtext {
    position: absolute;
    left: 65px;
    top: 60px;
    line-height: 17.500px;
    color: #f2f2f2;
    text-shadow: 0 0 2px #222;
  }
  .toolbar {
    position: absolute;
    left: 8px;
    top: 60px;
    width: 39px;
    display: flex;
    flex-direction: column;
    gap: 6px;
    height: 629px;
    overflow: hidden;
  }
  .tgroup {
    display: flex;
    flex-direction: column;
    gap: 1px;
    border-radius: 4px;
    overflow: hidden;
    flex: none;
  }
  .tool {
    position: relative;
    height: 33.250px;
    background: #282828;
    display: flex;
    align-items: center;
    justify-content: center;
    flex: none;
  }
  .tool.active {
    background: #4772b3;
  }
  .tool.corner::after {
    content: "";
    position: absolute;
    right: 2px;
    bottom: 2px;
    border: 2px solid transparent;
    border-right-color: #777;
    border-bottom-color: #777;
  }
  .ticon {
    width: 25px;
    height: 25px;
  }
  .tbscroll {
    position: absolute;
    left: 3px;
    top: 61px;
    width: 2px;
    height: 515px;
    background: #4c4c4c;
    border-radius: 1px;
  }
  .navpill {
    position: absolute;
    right: 8px;
    top: 145px;
    width: 29px;
    height: 122px;
    background: #363636;
    border-radius: 15px;
    display: flex;
    flex-direction: column;
    align-items: center;
    gap: 12px;
    padding-top: 7px;
    box-sizing: border-box;
  }
  .nav {
    width: 18px;
    height: 18px;
  }
  .sidetab {
    position: absolute;
    right: 0;
    top: 73px;
    width: 10px;
    height: 18px;
    background: #4a4a4a;
    border-radius: 3px 0 0 3px;
  }
  .sidetab svg {
    display: block;
    width: 10px;
    height: 18px;
    fill: none;
    stroke: #bbb;
    stroke-width: 1;
  }

  /* timeline */
  .timeline {
    height: 51px;
    flex: none;
    background: #303030;
    border-radius: 6px;
    overflow: hidden;
    display: flex;
    flex-direction: column;
  }
  .tl-head {
    height: 26px;
    flex: none;
    display: flex;
    align-items: center;
    padding: 0 8px;
    box-sizing: border-box;
  }
  .tl-menu {
    color: #c8c8c8;
  }
  .tl-menu.first {
    margin-left: 13px;
    width: 24px;
  }
  .tl-menu.second {
    margin-left: 15px;
    width: 37px;
  }
  .playback {
    width: 74px;
    margin-left: 13px;
    padding: 0 4px 0 8px;
    justify-content: flex-start;
  }
  .autok {
    margin-left: 267px;
  }
  .transport {
    margin-left: 6px;
  }
  .kf {
    margin-left: 5px;
  }
  .snapk {
    margin-left: 6px;
  }
  .tl-right {
    margin-left: auto;
    display: flex;
    align-items: center;
  }
  .frame {
    width: 73px;
    height: 19px;
    line-height: 19px;
    text-align: center;
    background: #545454;
    border-radius: 4px;
    color: #ddd;
  }
  .range {
    margin-left: 6px;
  }
  .rng {
    justify-content: space-between;
    padding: 0 13px 0 14px;
  }
  .rng em {
    font-style: normal;
    color: #ddd;
  }
  .startf {
    width: 89px;
  }
  .endf {
    width: 85px;
    padding-right: 14px;
  }
  .tlo {
    margin-left: 16px;
  }
  .ruler {
    position: relative;
    height: 22px;
    flex: none;
    background: #1e1e1e;
    display: flex;
    align-items: center;
    padding-left: 14px;
    color: #8c8c8c;
    font-size: 11.500px;
  }
  .ruler span {
    width: 56.200px;
    text-align: center;
    flex: none;
  }
  .playhead {
    position: absolute;
    left: 167px;
    top: 1px;
    width: 22px;
    height: 20px;
    line-height: 20px;
    text-align: center;
    background: #4772b3;
    border-radius: 4px;
    color: #fff;
  }
  .tl-foot {
    flex: 1;
    background: #303030;
  }

  /* outliner */
  .outliner {
    height: 135px;
    flex: none;
    background: #282828;
    border-radius: 6px;
    overflow: hidden;
  }
  .ol-head {
    height: 24px;
    display: flex;
    align-items: center;
    padding-left: 9px;
    margin-bottom: 4px;
  }
  .olb {
    width: 31px;
    background: transparent;
    border: 1px solid #3b3b3b;
  }
  .olb.v {
    margin-left: 5px;
  }
  .olb .ic {
    width: 15px;
    height: 15px;
  }
  .searchbox {
    height: 19px;
    background: #1d1d1d;
    border-radius: 4px;
    display: flex;
    align-items: center;
    padding-left: 5px;
    gap: 7px;
    color: #5f5f5f;
    box-sizing: border-box;
  }
  .searchbox.ol {
    width: 118px;
    margin-left: 15px;
    border: 1px solid #333;
  }
  .s14 {
    width: 14px;
    height: 14px;
  }
  .olf {
    width: 20px;
    margin-left: 16px;
    background: transparent;
    border: 1px solid #3b3b3b;
  }
  .oln {
    width: 19px;
    margin-left: 5px;
    background: #4f4f4f;
    border-radius: 4px 0 0 4px;
  }
  .olrow {
    height: 20px;
    display: flex;
    align-items: center;
    color: #c8c8c8;
    box-sizing: border-box;
  }
  .olrow.r1 {
    padding-left: 24px;
    color: #a8a8a8;
  }
  .b {
    width: 15px;
    height: 15px;
    margin-right: 6px;
  }
  .b14 {
    width: 14px;
    height: 14px;
  }
  .r2 {
    padding-left: 26px;
    padding-right: 6px;
  }
  .boxbg {
    width: 18px;
    height: 18px;
    margin-left: 7px;
    margin-right: 5px;
    background: #3a3a3a;
    border: 1px solid #5b5b5b;
    border-radius: 4px;
    box-sizing: border-box;
    display: flex;
    align-items: center;
    justify-content: center;
  }
  .grow {
    flex: 1;
  }
  .r {
    width: 15px;
    height: 15px;
    margin-right: 5px;
  }
  .olrow.r3 {
    margin: 0 1px 0 3px;
    height: 19px;
    background: #334f80;
    border: 1px solid #4a69a0;
    border-radius: 4px;
    padding-left: 2px;
    padding-right: 4px;
  }
  .em {
    color: #ccc;
    width: 15px;
    height: 15px;
  }
  .rsep {
    width: 1px;
    height: 10px;
    background: #5a76a8;
    margin: 0 16px 0 6px;
  }
  .r3 .arrow {
    margin-right: 6px;
  }
  .obg,
  .dbg {
    width: 18px;
    height: 17px;
    background: #46648f;
    border-radius: 4px;
    display: flex;
    align-items: center;
    justify-content: center;
    flex: none;
  }
  .dbg {
    background: #2f5a7a;
  }
  .t14 {
    width: 13px;
    height: 13px;
  }
  .objname {
    color: #e8a53c;
    margin-left: 7px;
    width: 74px;
  }

  /* properties */
  .props {
    height: 604px;
    flex: none;
    background: #282828;
    border-radius: 6px;
    overflow: hidden;
    display: flex;
    flex-direction: column;
  }
  .pr-head {
    height: 25px;
    flex: none;
    display: flex;
    align-items: center;
    padding-left: 9px;
  }
  .searchbox.pr {
    width: 117px;
    margin-left: 33px;
    color: #606060;
  }
  .prf {
    width: 20px;
    margin-left: 53px;
    background: #262626;
  }
  .pr-body {
    flex: 1;
    min-height: 0;
    display: flex;
    background: #303030;
  }
  .pr-tabs {
    width: 29px;
    flex: none;
    background: #181818;
    padding: 8px 0 0 1px;
    box-sizing: border-box;
    display: flex;
    flex-direction: column;
    gap: 6px;
  }
  .ptgroup {
    background: #262626;
    border-radius: 6px 0 0 6px;
    display: flex;
    flex-direction: column;
  }
  .ptgroup:nth-child(2) {
    padding-top: 1px;
  }
  .ptgroup:nth-child(4) {
    margin-top: 2px;
  }
  .ptgroup:nth-child(4) .pt {
    height: 28px;
  }
  .pt {
    height: 28.200px;
    display: flex;
    align-items: center;
    justify-content: center;
  }
  .pt .ic {
    width: 15px;
    height: 15px;
  }
  .pt.act {
    background: #303030;
    border-radius: 6px 0 0 6px;
  }
  .ptmore {
    display: flex;
    justify-content: center;
    margin-top: 6px;
  }
  .ptmore .chev {
    stroke: #555;
  }
  .pr-main {
    width: 235px;
    flex: none;
    box-sizing: border-box;
    padding: 0 0 0 8px;
    overflow: hidden;
  }
  .crumb {
    height: 38px;
    display: flex;
    align-items: center;
    color: #c8c8c8;
    padding: 0 3px 0 2px;
  }
  .fr {
    color: #bbb;
    width: 15px;
    height: 15px;
  }
  .crumb span {
    margin-left: 8px;
  }
  .crumbpin {
    margin-left: auto;
    width: 14px;
    height: 14px;
  }
  .namefield {
    height: 19px;
    margin-top: 7px;
    width: 226px;
    display: flex;
    background: #1d1d1d;
    border-radius: 4px;
    overflow: hidden;
  }
  .nf-ic {
    width: 30px;
    flex: none;
    background: #262626;
    display: flex;
    align-items: center;
    justify-content: center;
    gap: 1px;
    border-right: 1px solid #151515;
    box-sizing: border-box;
  }
  .nf-tx {
    padding-left: 8px;
    line-height: 19px;
    color: #d0d0d0;
  }
  .panel {
    width: 227px;
    background: #3a3a3a;
    border: 1px solid #424242;
    border-radius: 5px;
    box-sizing: border-box;
    margin-bottom: 2px;
    color: #c8c8c8;
  }
  .panel.transform {
    margin-top: 10px;
    height: 280px;
    display: flex;
    flex-direction: column;
  }
  .panel.closed {
    height: 24.400px;
  }
  .ph {
    height: 24px;
    display: flex;
    align-items: center;
    padding-left: 7px;
  }
  .panel.transform .ph {
    height: 26px;
  }
  .ph > span {
    margin-left: 4px;
  }
  .tf {
    margin-top: 6px;
    display: flex;
    flex-direction: column;
    gap: 6px;
  }
  .fgroup {
    display: flex;
    flex-direction: column;
    gap: 1px;
  }
  .frow {
    display: grid;
    height: 19px;
    align-items: center;
    grid-template-columns: 79px 10px 87px 22px 18px;
  }
  .flabel {
    text-align: right;
    grid-column: 1;
    color: #c4c4c4;
  }
  .num,
  .modebtn {
    grid-column: 3;
    height: 19px;
    line-height: 19px;
    text-align: center;
    background: #545454;
    color: #dcdcdc;
  }
  .fgroup .frow:first-child .num {
    border-radius: 4px 0 0 0;
  }
  .fgroup .frow:last-child .num {
    border-radius: 0 0 0 4px;
  }
  .modebtn {
    background: #262626;
    border-radius: 4px;
    display: flex;
    align-items: center;
    padding: 0 4px 0 7px;
    box-sizing: border-box;
  }
  .lk {
    width: 14px;
    height: 14px;
    grid-column: 4;
    justify-self: center;
  }
  .frow b {
    grid-column: 4;
  }
  .dot {
    grid-column: 5;
    width: 4px;
    height: 4px;
    border-radius: 50%;
    background: #f0f0f0;
    justify-self: center;
  }
  .delta {
    display: flex;
    align-items: center;
    margin-top: 16px;
    padding-left: 22px;
  }
  .delta span {
    margin-left: 3px;
  }
  .scrolltrack {
    flex: 1;
    position: relative;
  }
  .scrolltrack i {
    position: absolute;
    left: 2px;
    top: 10px;
    bottom: 49px;
    width: 3px;
    background: #4a4a4a;
    border-radius: 2px;
  }

  /* status */
  .status {
    flex: 1;
    display: flex;
    align-items: center;
    justify-content: flex-end;
    padding-right: 13px;
    background: #161616;
    color: #8f8f8f;
    letter-spacing: 0.400px;
  }
  .lang {
    display: flex;
    align-items: flex-end;
  }
  .g {
    width: 15px;
    height: 15px;
  }
  .lang sub {
    font-size: 7px;
    margin-left: 1px;
    margin-bottom: -1px;
  }
  .st-sep {
    width: 1px;
    height: 13px;
    background: #666;
    margin: 0 6px 0 4px;
  }
</style>
